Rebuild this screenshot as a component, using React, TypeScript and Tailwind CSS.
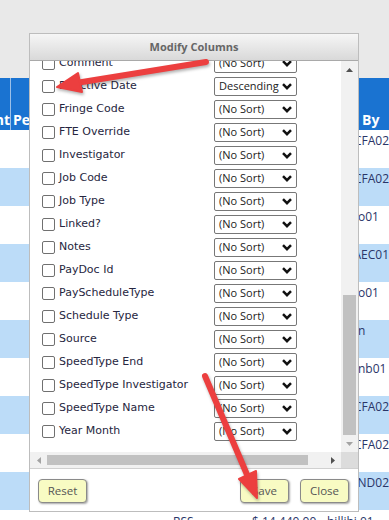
import React from "react";

const columns: [string, string][] = [
  ["Comment", "(No Sort)"],
  ["Effective Date", "Descending"],
  ["Fringe Code", "(No Sort)"],
  ["FTE Override", "(No Sort)"],
  ["Investigator", "(No Sort)"],
  ["Job Code", "(No Sort)"],
  ["Job Type", "(No Sort)"],
  ["Linked?", "(No Sort)"],
  ["Notes", "(No Sort)"],
  ["PayDoc Id", "(No Sort)"],
  ["PayScheduleType", "(No Sort)"],
  ["Schedule Type", "(No Sort)"],
  ["Source", "(No Sort)"],
  ["SpeedType End", "(No Sort)"],
  ["SpeedType Investigator", "(No Sort)"],
  ["SpeedType Name", "(No Sort)"],
  ["Year Month", "(No Sort)"],
];

const byValues = ["1CFA02", "1CFA02", "o01", "AEC01", "o01", "n", "nb01", "1CFA02", "1CFA02", "AND02"];

const Chevron = () => (
  <svg width="10" height="7" viewBox="0 0 10 7">
    <path d="M1 1.2 L5 5.2 L9 1.2" fill="none" stroke="#111" strokeWidth="2.5" />
  </svg>
);

const Tri = ({ dir, color }: { dir: "up" | "down" | "left" | "right"; color: string }) => {
  const pts = {
    up: "0,4 3.5,0 7,4",
    down: "0,0 7,0 3.5,4",
    left: "4,0 4,7 0,3.5",
    right: "0,0 0,7 4,3.5",
  }[dir];
  const w = dir === "up" || dir === "down" ? 7 : 4;
  const h = dir === "up" || dir === "down" ? 4 : 7;
  return (
    <svg width={w} height={h} viewBox={`0 0 ${w} ${h}`}>
      <polygon points={pts} fill={color} />
    </svg>
  );
};

const Button = ({ label }: { label: string }) => (
  <button className="h-[24px] w-[49px] rounded-[4px] border border-[#8a8a8a] bg-[#f8fbc3] text-[11.5px] text-[#555] shadow-[1px_1px_2px_rgba(0,0,0,0.35)]">
    {label}
  </button>
);

export default function App() {
  return (
    <div
      className="relative w-[389px] h-[520px] overflow-hidden bg-white"
      style={{ fontFamily: "'Open Sans', sans-serif" }}
    >
      {/* page behind the dialog */}
      <div className="flex flex-col">
        <div className="h-[78px] bg-[#e9e9e9]" />
        <div className="flex h-[52px] items-end bg-[#1a73d1] text-[14px] font-bold leading-[20px] text-white">
          <div className="flex h-full w-[11px] items-end justify-end overflow-hidden border-r border-[#9cc0e8]">
            <span>nt</span>
          </div>
          <div className="w-[348px] pl-[2px]">Per</div>
          <div className="pl-[3px]">By</div>
        </div>
        {byValues.map((v, i) => (
          <div
            key={i}
            className={`flex h-[38px] pt-[3px] text-[12px] leading-[16px] text-[#2a3568] ${i % 2 ? "bg-[#bcdcf8]" : "bg-white"}`}
          >
            <div className="w-[358px]" />
            <div>{v}</div>
          </div>
        ))}
        <div className="flex h-[38px] pt-[4px] pl-[173px] text-[12px] leading-[16px] text-[#2a3568]">
          <span className="w-[79px]">RSS</span>
          <span className="w-[75px]">$ 14,440.00</span>
          <span>hillihi 01</span>
        </div>
      </div>

      {/* Modify Columns dialog */}
      <div className="absolute left-[29px] top-[33px] flex h-[479px] w-[330px] flex-col border border-[#bdbdbd] bg-white">
        <div className="flex h-[27px] items-center justify-center border-b border-[#a9a9a9] bg-gradient-to-b from-[#f6f6f6] to-[#d9d9d9] text-[11px] font-bold text-[#666]">
          Modify Columns
        </div>

        <div className="flex h-[391px]">
          <div className="w-[311px] overflow-hidden">
            <div className="-mt-[9px]" style={{ fontFamily: "'DejaVu Sans', sans-serif" }}>
              {columns.map(([name, sort]) => (
                <div key={name} className="flex h-[23px] items-center pl-[12px]">
                  <div className="h-[13px] w-[13px] rounded-[2px] border border-[#707070] bg-white" />
                  <div className="ml-[4px] w-[155px] text-[11px] text-[#262640]">{name}</div>
                  <div
                    className="flex h-[19px] w-[83px] items-center justify-between rounded-[2px] border border-[#777] pl-[4px] pr-[4px] text-[11px] text-[#222]"
                    style={{ fontFamily: "'Open Sans', sans-serif" }}
                  >
                    <span>{sort}</span>
                    <Chevron />
                  </div>
                </div>
              ))}
            </div>
          </div>
          <div className="flex w-[17px] flex-col bg-[#f1f1f1]">
            <div className="flex h-[17px] items-center justify-center">
              <Tri dir="up" color="#505050" />
            </div>
            <div className="flex flex-1 flex-col justify-end px-[2px]">
              <div className="h-[140px] bg-[#c1c1c1]" />
            </div>
            <div className="flex h-[17px] items-center justify-center">
              <Tri dir="down" color="#a3a3a3" />
            </div>
          </div>
        </div>

        <div className="flex h-[16px]">
          <div className="flex w-[311px] items-center bg-[#f1f1f1]">
            <div className="flex w-[17px] justify-center">
              <Tri dir="left" color="#a3a3a3" />
            </div>
            <div className="h-[10px] w-[261px] bg-[#c1c1c1]" />
            <div className="flex-1" />
            <div className="flex w-[17px] justify-center">
              <Tri dir="right" color="#505050" />
            </div>
          </div>
          <div className="w-[17px] bg-[#dcdcdc]" />
        </div>

        <div className="flex h-[43px] items-start border-t border-[#d0d0d0] pt-[10px] pl-[8px] pr-[9px]">
          <Button label="Reset" />
          <div className="flex-1" />
          <Button label="Save" />
          <div className="w-[11px]" />
          <Button label="Close" />
        </div>
      </div>

      {/* annotation arrows */}
      <svg
        className="pointer-events-none absolute inset-0"
        width="389"
        height="520"
        viewBox="0 0 389 520"
        style={{ filter: "drop-shadow(1px 2px 1.5px rgba(0,0,0,0.3))" }}
      >
        <g fill="#ec3f3f" stroke="#ec3f3f" strokeLinecap="round" strokeLinejoin="round">
          <line x1="206" y1="62" x2="76" y2="83" strokeWidth="6" />
          <polygon points="57,87 78,73 82,92" strokeWidth="2" />
          <line x1="205" y1="376" x2="248" y2="477" strokeWidth="6" />
          <polygon points="257,498 239,479 256,471" strokeWidth="2" />
        </g>
      </svg>
    </div>
  );
}
